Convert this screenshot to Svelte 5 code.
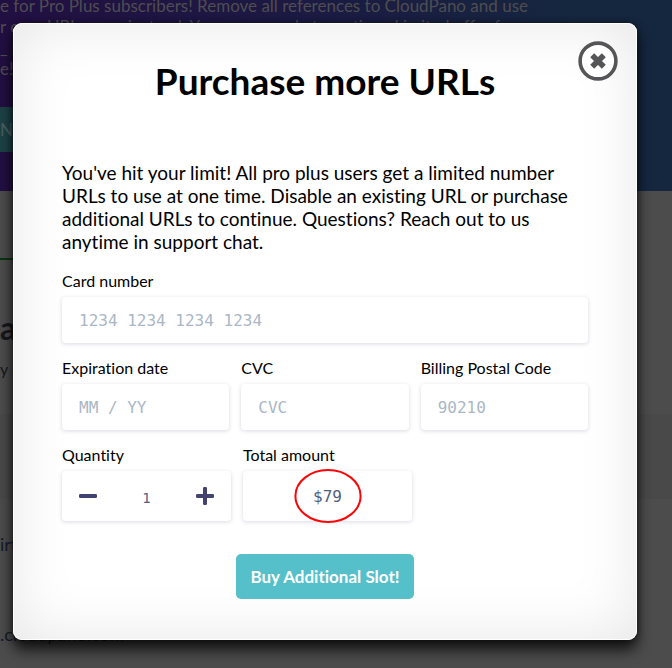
<script>
  let quantity = $state(1);
  let open = $state(true);
  const price = 79;
  const total = $derived('$' + price * quantity);
</script>

<div class="page">
  <div class="backdrop-content" aria-hidden="true">
    <section class="banner">
      <p>
        e for Pro Plus subscribers! Remove all references to CloudPano and use<br />
        r own URL name instead. You can cancel at any time. Limited offer for<br />
        _ for subscribers<br />
        e!
      </p>
      <span class="notify">No thanks</span>
    </section>
    <section class="listing">
      <div class="tab-line"></div>
      <h2>a</h2>
      <p class="intro">y using</p>
      <div class="row stripe">irtual</div>
      <div class="row domain">.cloudpano.com</div>
    </section>
  </div>

  {#if open}
    <div class="dialog" role="dialog" aria-modal="true" aria-labelledby="dialog-title">
      <button class="close" type="button" aria-label="Close" onclick={() => (open = false)}>
        <svg viewBox="0 0 40 40" width="40" height="40" aria-hidden="true">
          <circle cx="20" cy="20" r="17.9" fill="#fff" stroke="#555557" stroke-width="3.6" />
          <path d="M14.2 14.2 25.8 25.8M25.8 14.2 14.2 25.8" stroke="#555557" stroke-width="5.6" />
        </svg>
      </button>
      <h1 id="dialog-title">Purchase more URLs</h1>
      <p class="message">
        You've hit your limit! All pro plus users get a limited number URLs to use at one time.
        Disable an existing URL or purchase additional URLs to continue. Questions? Reach out to us
        anytime in support chat.
      </p>

      <form onsubmit={(e) => e.preventDefault()}>
        <div class="field wide">
          <label for="card">Card number</label>
          <input id="card" type="text" inputmode="numeric" placeholder="1234 1234 1234 1234" />
        </div>
        <div class="field">
          <label for="expiry">Expiration date</label>
          <input id="expiry" type="text" placeholder="MM / YY" />
        </div>
        <div class="field">
          <label for="cvc">CVC</label>
          <input id="cvc" type="text" placeholder="CVC" />
        </div>
        <div class="field">
          <label for="postal">Billing Postal Code</label>
          <input id="postal" type="text" placeholder="90210" />
        </div>
        <div class="order wide">
          <div class="field">
            <label for="quantity">Quantity</label>
            <div class="stepper">
              <button type="button" aria-label="Decrease" onclick={() => (quantity = Math.max(1, quantity - 1))}>
                <svg viewBox="0 0 18 18" width="18" height="18" aria-hidden="true">
                  <rect x="0" y="7" width="18" height="4" rx="1.2" fill="#434371" />
                </svg>
              </button>
              <input id="quantity" type="text" inputmode="numeric" bind:value={quantity} />
              <button type="button" aria-label="Increase" onclick={() => (quantity = Number(quantity) + 1)}>
                <svg viewBox="0 0 18 18" width="18" height="18" aria-hidden="true">
                  <rect x="0" y="7" width="18" height="4" rx="1.2" fill="#434371" />
                  <rect x="7" y="0" width="4" height="18" rx="1.2" fill="#434371" />
                </svg>
              </button>
            </div>
          </div>
          <div class="field">
            <label for="total">Total amount</label>
            <div class="total">
              <input id="total" type="text" readonly value={total} />
              <svg class="ring" viewBox="0 0 68 56" width="68" height="56" aria-hidden="true">
                <ellipse cx="34" cy="28" rx="32.6" ry="26" fill="none" stroke="#fa0508" stroke-width="2" />
              </svg>
            </div>
          </div>
        </div>
        <button class="buy" type="submit">Buy Additional Slot!</button>
      </form>
    </div>
  {/if}
</div>

<style>
  :global(body) {
    margin: 0;
    background: #4c4c4c;
  }
  .page {
    position: relative;
    min-height: 100vh;
    overflow: hidden;
    font-family: Lato, 'Open Sans', sans-serif;
    font-variant-ligatures: none;
    color: #000;
  }
  .page * {
    box-sizing: border-box;
  }
  .backdrop-content {
    position: absolute;
    inset: 0;
    overflow: hidden;
    white-space: nowrap;
  }
  .banner {
    display: flow-root;
    height: 191px;
    background: linear-gradient(90deg, #220f42 0%, #1b1a43 45%, #15263f 85%);
  }
  .banner p {
    height: 112px;
    margin: -5px 0 0;
    font-size: 17px;
    line-height: 21px;
    color: #4f4d50;
  }
  .notify {
    display: inline-block;
    height: 45px;
    padding-right: 8px;
    background: #1d4146;
    color: #4b6063;
    font-size: 17px;
    line-height: 45px;
  }
  .tab-line {
    height: 69px;
    width: 120px;
    border-bottom: 2px solid #0b3410;
  }
  .listing h2 {
    margin: 48px 0 0;
    font-size: 32px;
    line-height: 40px;
    color: #17171c;
  }
  .intro {
    margin: 9px 0 0;
    font-size: 16px;
    line-height: 24px;
    color: #17171c;
  }
  .row {
    color: #161b2b;
    font-size: 18px;
    line-height: 24px;
  }
  .stripe {
    margin-top: 33px;
    height: 172px;
    padding-top: 118px;
    background: linear-gradient(#494949 0, #494949 85px, #4c4c4c 85px);
  }
  .domain {
    padding-top: 36px;
  }
  .dialog {
    position: relative;
    margin: 23px 35px 28px 13px;
    padding: 34px 49px 41px;
    border-radius: 9px;
    background: #fff;
    box-shadow:
      0 10px 14px rgba(0, 0, 0, 0.75),
      0 0 6px rgba(0, 0, 0, 0.5),
      inset 0 0 0 1px #fff,
      inset 0 0 60px rgba(0, 0, 0, 0.1);
  }
  .close {
    position: absolute;
    top: 18px;
    right: 19px;
    width: 40px;
    height: 40px;
    padding: 0;
    border: 0;
    background: none;
    cursor: pointer;
  }
  svg {
    display: block;
  }
  h1 {
    margin: 0;
    text-align: center;
    font-size: 37px;
    line-height: 48px;
    font-weight: 700;
  }
  .message {
    margin: 56px 0 0;
    font-size: 19px;
    line-height: 23px;
  }
  form {
    display: grid;
    grid-template-columns: repeat(3, 1fr);
    gap: 14px 12px;
    margin-top: 17px;
  }
  .wide {
    grid-column: 1 / -1;
  }
  .order {
    display: flex;
    gap: 12px;
  }
  .order .field {
    flex: 0 1 169px;
    min-width: 0;
  }
  label {
    display: block;
    margin-bottom: 5px;
    font-size: 16px;
    line-height: 22px;
  }
  input {
    display: block;
    width: 100%;
    height: 46px;
    padding: 0 17px;
    border: 0;
    border-radius: 4px;
    outline: 0;
    background: #fff;
    box-shadow: 0 1px 4px rgba(50, 50, 93, 0.18);
    font-family: 'DejaVu Sans Mono', 'Liberation Mono', monospace;
    font-size: 16px;
    color: #525f7f;
  }
  input::placeholder {
    color: #aab7c6;
    opacity: 1;
  }
  .stepper {
    display: flex;
    align-items: center;
    justify-content: space-between;
    height: 50px;
    padding: 0 17px;
    border-radius: 4px;
    background: #fff;
    box-shadow: 0 1px 4px rgba(50, 50, 93, 0.18);
  }
  .stepper button {
    padding: 0;
    border: 0;
    background: none;
    cursor: pointer;
  }
  .stepper input {
    width: 40px;
    padding: 4px 0 0;
    background: none;
    box-shadow: none;
    text-align: center;
    font-size: 14px;
  }
  .total {
    position: relative;
  }
  .total input {
    height: 50px;
    text-align: center;
  }
  .ring {
    position: absolute;
    top: 50%;
    left: 50%;
    transform: translate(-50%, -50%);
  }
  .buy {
    grid-column: 1 / -1;
    justify-self: center;
    height: 45px;
    margin-top: 19px;
    padding: 0 14px;
    border: 0;
    border-radius: 5px;
    background: #55bfca;
    color: #fff;
    font-family: inherit;
    font-size: 17px;
    font-weight: 700;
    font-variant-ligatures: none;
    cursor: pointer;
  }
</style>
